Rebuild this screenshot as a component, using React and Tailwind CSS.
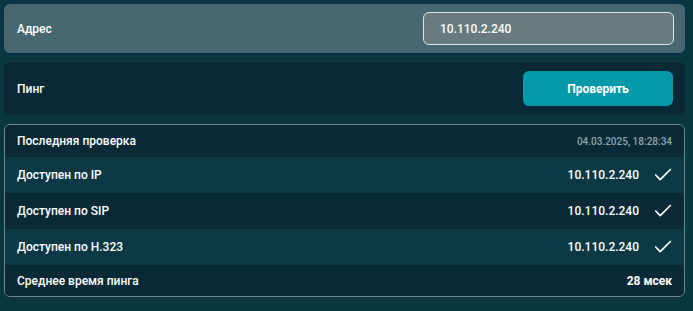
import React from "react";
import { Check } from "lucide-react";

const rows = [
  { label: "Доступен по IP", value: "10.110.2.240", ok: true },
  { label: "Доступен по SIP", value: "10.110.2.240", ok: true },
  { label: "Доступен по H.323", value: "10.110.2.240", ok: true },
];

export default function App() {
  return (
    <div
      className="min-h-[311px] bg-[#0a3642] pt-1 pl-1 pr-2 flex flex-col gap-[9px] text-white"
      style={{ fontFamily: "Roboto, 'Liberation Sans', sans-serif" }}
    >
      {/* адрес */}
      <div className="h-[49px] bg-[#476870] rounded-md pl-[13px] pr-[11px] flex items-center justify-between">
        <span className="text-[12px] font-medium">Адрес</span>
        <div className="w-[251px] h-[33px] rounded-md border border-[#dfe6e8] bg-[#687a7d] flex items-center px-4 text-[12px] font-medium">
          10.110.2.240
        </div>
      </div>

      {/* пинг */}
      <div className="h-[53px] bg-[#082935] rounded-md pl-[13px] pr-3 flex items-center justify-between">
        <span className="text-[12px] font-medium">Пинг</span>
        <button className="w-[150px] h-[35px] rounded-md bg-[#0598a8] text-[12px] font-bold">
          Проверить
        </button>
      </div>

      {/* результаты */}
      <div className="border border-[#6d8a90] rounded-md overflow-hidden">
        <div className="h-[32px] bg-[#082935] px-3 flex items-center justify-between">
          <span className="text-[12px] font-medium">Последняя проверка</span>
          <span className="text-[10px] font-medium text-[#94a6ab]">04.03.2025, 18:28:34</span>
        </div>
        {rows.map((r, i) => (
          <div
            key={r.label}
            className={
              "h-[36px] pl-3 pr-[10px] flex items-center justify-between " +
              (i % 2 === 0 ? "bg-[#0b3845]" : "bg-[#082935]")
            }
          >
            <span className="text-[12px] font-medium">{r.label}</span>
            <span className="flex items-center gap-[13px]">
              <span className="text-[12px] font-medium">{r.value}</span>
              {r.ok && <Check size={22} strokeWidth={1.8} />}
            </span>
          </div>
        ))}
        <div className="h-[31px] bg-[#082935] px-3 flex items-center justify-between">
          <span className="text-[12px] font-medium">Среднее время пинга</span>
          <span className="text-[12px] font-bold">28 мсек</span>
        </div>
      </div>
    </div>
  );
}
